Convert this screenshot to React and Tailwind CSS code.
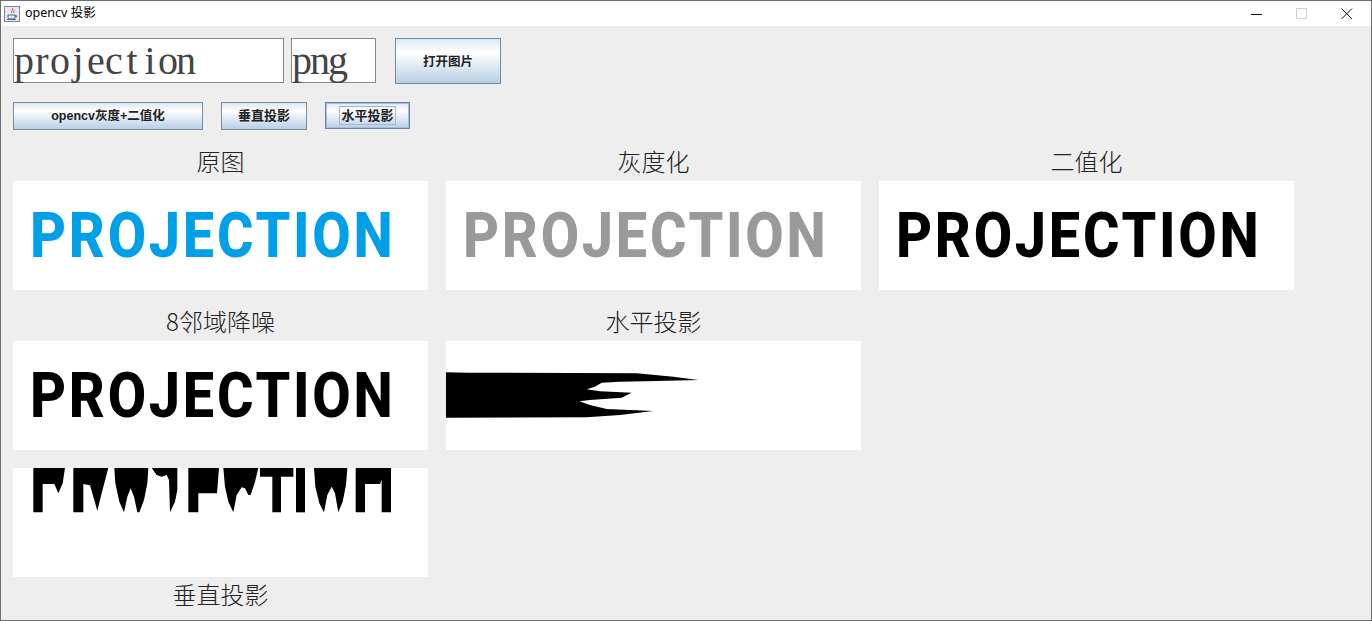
function JBtn({ w, h, children, focus, size = "text-[13px]", extra = "" }) {
  return (
    <div
      className={`${w} ${h} ${extra} flex items-center justify-center border ${focus ? "border-[#6c84aa] ring-1 ring-inset ring-[#a9bdd6]" : "border-[#7a8a99]"} bg-[linear-gradient(to_bottom,#dde8f3_0%,#ffffff_30%,#b8cfe5_100%)] font-bold ${size} text-[#222222] [font-family:'Liberation_Sans','Noto_Sans_CJK_SC',sans-serif]`}
    >
      {focus ? <span className="border border-[#a3b8cc] px-px leading-[17px]">{children}</span> : children}
    </div>
  );
}

function Field({ w, text }) {
  return (
    <div className={`${w} h-[45px] border border-[#8a8a8a] bg-white flex items-center pl-px text-[40px] text-[#444444] font-['Liberation_Serif',serif]`}>
      <div className="flex leading-[40px]">
        {text.split("").map((c, i) => (
          <span key={i} className="w-[18px] flex justify-center">{c}</span>
        ))}
      </div>
    </div>
  );
}

function Label({ children }) {
  return (
    <div className="w-[415px] h-[26px] flex items-center justify-center text-[24px] text-[#222222] font-['Noto_Sans_CJK_SC',sans-serif] font-light">
      {children}
    </div>
  );
}

function Logo({ color }) {
  return (
    <div className="w-[415px] h-[109px] bg-white flex items-center pl-[17px] overflow-hidden">
      <span className={`${color} text-[63px] font-extrabold tracking-[3.1px] leading-none font-['Roboto',sans-serif] whitespace-nowrap inline-block scale-x-[0.885] origin-left`}>PROJECTION</span>
    </div>
  );
}

const hz = (pts) => "M" + pts.map(([x, y]) => `${440 + x / 3} ${360 + y / 3}`).join("L") + "Z";
const v1 = (pts) => pts.map(([x, y]) => `${20 + x / 3} ${460 + y / 3}`);
const v2 = (pts) => pts.map(([x, y]) => `${210 + x / 3} ${460 + y / 3}`);
const poly = (a) => "M" + a.join("L") + "Z";

const H_PATH = hz([[18,37],[85,38],[590,40],[700,50],[775,60],[650,63],[540,65],[485,68],[465,80],[440,88],[480,94],[575,98],[545,113],[450,120],[418,124],[450,135],[500,147],[640,153],[540,165],[440,172],[18,173]]);

const V_PATHS = [
  v1([[40,24],[135,24],[128,70],[115,100],[103,72],[68,72],[68,157],[40,157]]),
  v1([[160,24],[265,24],[258,50],[245,100],[232,152],[210,76],[190,72],[190,157],[160,157]]),
  v1([[283,24],[385,24],[382,70],[372,120],[358,157],[352,157],[342,110],[332,85],[322,110],[312,157],[298,125],[286,70]]),
  v1([[395,24],[472,24],[472,90],[465,125],[450,157],[447,60],[440,45],[425,50],[410,45]]),
  v1([[505,24],[597,24],[591,100],[535,100],[535,157],[505,157]]),
  v2([[40,24],[145,24],[135,65],[122,105],[115,105],[105,85],[95,82],[80,105],[70,157],[55,125],[45,80]]),
  v2([[150,24],[250,24],[250,50],[213,50],[213,157],[187,157],[187,50],[150,50]]),
  v2([[258,24],[285,24],[285,157],[258,157]]),
  v2([[312,24],[412,24],[408,75],[398,125],[385,157],[375,100],[365,80],[352,105],[342,157],[328,130],[316,80]]),
  v2([[437,24],[543,24],[543,157],[515,157],[515,60],[510,72],[465,72],[465,157],[437,157]]),
];

export default function App() {
  return (
    <div className="w-[1372px] h-[621px] bg-[#eeeeee] border border-[#6e6e6e] overflow-hidden flex flex-col">
      {/* title bar */}
      <div className="h-[25px] bg-white flex items-center shrink-0">
        <svg width="16" height="16" viewBox="0 0 16 16" className="ml-[3px] shrink-0">
          <rect x="0.5" y="0.5" width="15" height="15" fill="#e8e8ef" stroke="#7c84a0" />
          <path d="M8 2c2 2-2 3 0 5M10 3.5c1 1.5-1.5 2 0 3.5" stroke="#d8502a" fill="none" />
          <path d="M4 9h7v2.5c0 1-1 1.5-3.5 1.5S4 12.5 4 11.5zM3 13.5h9" stroke="#4a6a94" fill="none" />
          <path d="M11 9.5h1.5v1.5H11" stroke="#4a6a94" fill="none" />
        </svg>
        <span className="ml-[5px] text-[12.5px] text-black" style={{ fontFamily: '"Noto Sans","Noto Sans CJK SC",sans-serif' }}>opencv 投影</span>
        <div className="ml-auto flex items-center">
          <svg width="12" height="12" viewBox="0 0 12 12" className="mr-[33px]"><path d="M0 6.5h11" stroke="#111111" /></svg>
          <svg width="12" height="12" viewBox="0 0 12 12" className="mr-[33px]"><rect x="0.5" y="0.5" width="10" height="10" fill="none" stroke="#d0d0d0" /></svg>
          <svg width="12" height="12" viewBox="0 0 12 12" className="mr-[18px]"><path d="M0.5 0.5l10.5 10.5M11 0.5L0.5 11" stroke="#111111" /></svg>
        </div>
      </div>

      {/* content */}
      <div className="pl-[12px] pt-[12px] flex flex-col">
        <div className="flex items-start">
          <Field w="w-[271px]" text="projection" />
          <div className="w-[7px]" />
          <Field w="w-[85px]" text="png" />
          <div className="w-[19px]" />
          <JBtn w="w-[106px]" h="h-[46px]" size="text-[12.5px]" extra="pt-[2px]">打开图片</JBtn>
        </div>
        <div className="flex gap-[18px] mt-[18px]">
          <JBtn w="w-[190px]" h="h-[28px]" size="text-[12.5px]">opencv灰度+二值化</JBtn>
          <JBtn w="w-[86px]" h="h-[28px]">垂直投影</JBtn>
          <JBtn w="w-[85px]" h="h-[27px]" focus>水平投影</JBtn>
        </div>

        <div className="flex gap-[18px] mt-[18px] mb-[7px]">
          <Label>原图</Label>
          <Label>灰度化</Label>
          <Label>二值化</Label>
        </div>
        <div className="flex gap-[18px]">
          <Logo color="text-[#00a0e9]" />
          <Logo color="text-[#9a9a9a]" />
          <Logo color="text-black" />
        </div>

        <div className="flex gap-[18px] mt-[18px] mb-[7px]">
          <Label>8邻域降噪</Label>
          <Label>水平投影</Label>
        </div>
        <div className="flex gap-[18px]">
          <Logo color="text-black" />
          <svg width="415" height="109" viewBox="446 341 415 109" className="bg-white block">
            <path d={H_PATH} fill="#000" />
          </svg>
        </div>

        <svg width="415" height="109" viewBox="13 468 415 109" className="bg-white block mt-[18px]">
          {V_PATHS.map((a, i) => <path key={i} d={poly(a)} fill="#000" />)}
        </svg>
        <div className="mt-[4px]"><Label>垂直投影</Label></div>
      </div>
    </div>
  );
}
